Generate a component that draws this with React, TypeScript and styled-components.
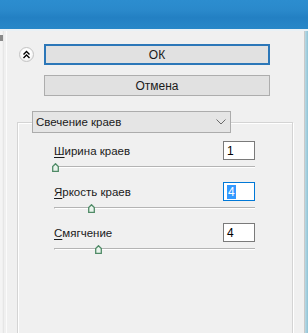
import React from "react";
import styled, { createGlobalStyle } from "styled-components";

const Global = createGlobalStyle`
  html, body { margin: 0; padding: 0; background: #f0f0f0; }
  body { font-family: "Liberation Sans", Arial, sans-serif; font-size: 11px; color: #000; }
`;

const Window = styled.div`
  width: 308px;
  height: 333px;
  display: flex;
  flex-direction: column;
  overflow: hidden;
  background: #f0f0f0;
`;

const TitleBar = styled.div`
  height: 29px;
  flex: none;
  background: linear-gradient(#2c8dcf 0%, #2a89cb 35%, #2380c3 60%, #2887c8 100%);
  border-bottom: 2px solid #e9f1f6;
`;

const Body = styled.div`
  flex: 1;
  display: flex;
  min-height: 0;
`;

const LeftFrame = styled.div`
  position: relative;
  width: 7px;
  flex: none;
  box-sizing: border-box;
  border-left: 2px solid #f4f4f4;
  border-right: 1px solid #fbfbfb;
  background: #e6e6e6;
  background-clip: content-box;
  padding: 0 2px 0 1px;
  &::before {
    content: "";
    position: absolute;
    left: -2px;
    top: 4px;
    width: 3px;
    height: 6px;
    background: #8a8a8a;
  }
`;

const RightFrame = styled.div`
  width: 4px;
  flex: none;
  box-sizing: border-box;
  border-left: 1px solid #c9c9c9;
  background: linear-gradient(90deg, #b9d9e4, #8fc3d6);
`;

const Main = styled.div`
  flex: 1;
  display: flex;
  flex-direction: column;
  overflow: hidden;
`;

const TopArea = styled.div`
  display: flex;
  align-items: flex-start;
  gap: 10px;
  padding: 13px 0 0 12px;
`;

const CollapseButton = styled.div`
  width: 15px;
  height: 15px;
  margin-top: 3px;
  box-sizing: border-box;
  border-radius: 50%;
  border: 1px solid #c4c4c4;
  background: radial-gradient(circle at 50% 40%, #ffffff 40%, #e4e4e4 100%);
  display: flex;
  align-items: center;
  justify-content: center;
`;

const ButtonColumn = styled.div`
  display: flex;
  flex-direction: column;
  gap: 10px;
  width: 226px;
`;

const PushButton = styled.div<{ $default?: boolean }>`
  height: 21px;
  box-sizing: border-box;
  display: flex;
  align-items: center;
  justify-content: center;
  background: #e1e1e1;
  border: ${(p) => (p.$default ? "2px solid #2c77b8" : "1px solid #adadad")};
  font-size: 12px;
  color: #1a1a1a;
`;

const GroupBox = styled.div`
  margin: 26px 11px 0 10px;
  min-height: 320px;
  flex: none;
  border: 1px solid #d4d4d4;
  box-shadow: inset 1px 1px 0 #ffffff, 1px 1px 0 #ffffff;
  display: flex;
  flex-direction: column;
  padding: 0 37px 0 36px;
`;

const Dropdown = styled.div`
  position: relative;
  z-index: 1;
  margin: -12px 0 0 -22px;
  width: 199px;
  height: 22px;
  box-sizing: border-box;
  border: 1px solid #acacac;
  background: #e5e5e5;
  display: flex;
  align-items: center;
  justify-content: space-between;
  padding: 0 4px 0 3px;
  font-size: 11.5px;
  color: #1a1a1a;
`;

const Rows = styled.div`
  margin-top: 8px;
  display: flex;
  flex-direction: column;
  gap: 8px;
`;

const Row = styled.div`
  display: flex;
  flex-direction: column;
`;

const Header = styled.div`
  height: 19px;
  display: flex;
  align-items: center;
  justify-content: space-between;
`;

const Label = styled.span`
  font-size: 11.5px;
  color: #1a1a1a;
  & u { text-decoration: underline; text-underline-offset: 2px; }
`;

const NumberBox = styled.div<{ $focused?: boolean }>`
  width: 32px;
  height: 19px;
  box-sizing: border-box;
  border: 1px solid ${(p) => (p.$focused ? "#0078d7" : "#7a7a7a")};
  background: #fff;
  display: flex;
  align-items: center;
  padding-left: 3px;
  font-size: 12px;
`;

const Selected = styled.span`
  background: #3399ff;
  color: #fff;
  padding: 0 1px;
  line-height: 14px;
`;

const SliderArea = styled.div`
  position: relative;
  height: 14px;
`;

const Track = styled.div`
  position: absolute;
  left: 0;
  right: 0;
  top: 6px;
  height: 2px;
  box-sizing: border-box;
  border-top: 1px solid #b4b4b4;
  border-bottom: 1px solid #ffffff;
  border-left: 1px solid #b4b4b4;
`;

const Thumb = styled.svg`
  position: absolute;
  top: 3px;
  width: 7px;
  height: 9px;
  transform: translateX(-3px);
`;

type Slider = {
  key: string;
  first: string;
  rest: string;
  value: number;
  min: number;
  max: number;
  focused?: boolean;
};

const sliders: Slider[] = [
  { key: "w", first: "Ш", rest: "ирина краев", value: 1, min: 1, max: 14 },
  { key: "b", first: "Я", rest: "ркость краев", value: 4, min: 0, max: 22, focused: true },
  { key: "s", first: "С", rest: "мягчение", value: 4, min: 1, max: 15 },
];

const TRACK_W = 200;

export default function App() {
  return (
    <>
      <Global />
      <Window>
        <TitleBar />
        <Body>
          <LeftFrame />
          <Main>
            <TopArea>
              <CollapseButton>
                <svg width="9" height="9" viewBox="0 0 9 9">
                  <path d="M1.5 4.5 L4.5 1.5 L7.5 4.5 M1.5 8 L4.5 5 L7.5 8" fill="none" stroke="#000" strokeWidth="1.4" />
                </svg>
              </CollapseButton>
              <ButtonColumn>
                <PushButton $default>ОК</PushButton>
                <PushButton>Отмена</PushButton>
              </ButtonColumn>
            </TopArea>
            <GroupBox>
              <Dropdown>
                <span>Свечение краев</span>
                <svg width="10" height="6" viewBox="0 0 10 6">
                  <path d="M0.5 0.5 L5 5 L9.5 0.5" fill="none" stroke="#6a6a6a" strokeWidth="1" />
                </svg>
              </Dropdown>
              <Rows>
                {sliders.map((s) => {
                  const pos = 1 + ((s.value - s.min) / (s.max - s.min)) * TRACK_W;
                  return (
                    <Row key={s.key}>
                      <Header>
                        <Label>
                          <u>{s.first}</u>
                          {s.rest}
                        </Label>
                        <NumberBox $focused={s.focused}>
                          {s.focused ? <Selected>{s.value}</Selected> : s.value}
                        </NumberBox>
                      </Header>
                      <SliderArea>
                        <Track />
                        <Thumb viewBox="0 0 7 9" style={{ left: pos }}>
                          <path d="M3.5 0.7 L6.3 3.5 L6.3 8.3 L0.7 8.3 L0.7 3.5 Z" fill="#e9f3ec" stroke="#4f8a66" strokeWidth="1.3" />
                        </Thumb>
                      </SliderArea>
                    </Row>
                  );
                })}
              </Rows>
            </GroupBox>
          </Main>
          <RightFrame />
        </Body>
      </Window>
    </>
  );
}
